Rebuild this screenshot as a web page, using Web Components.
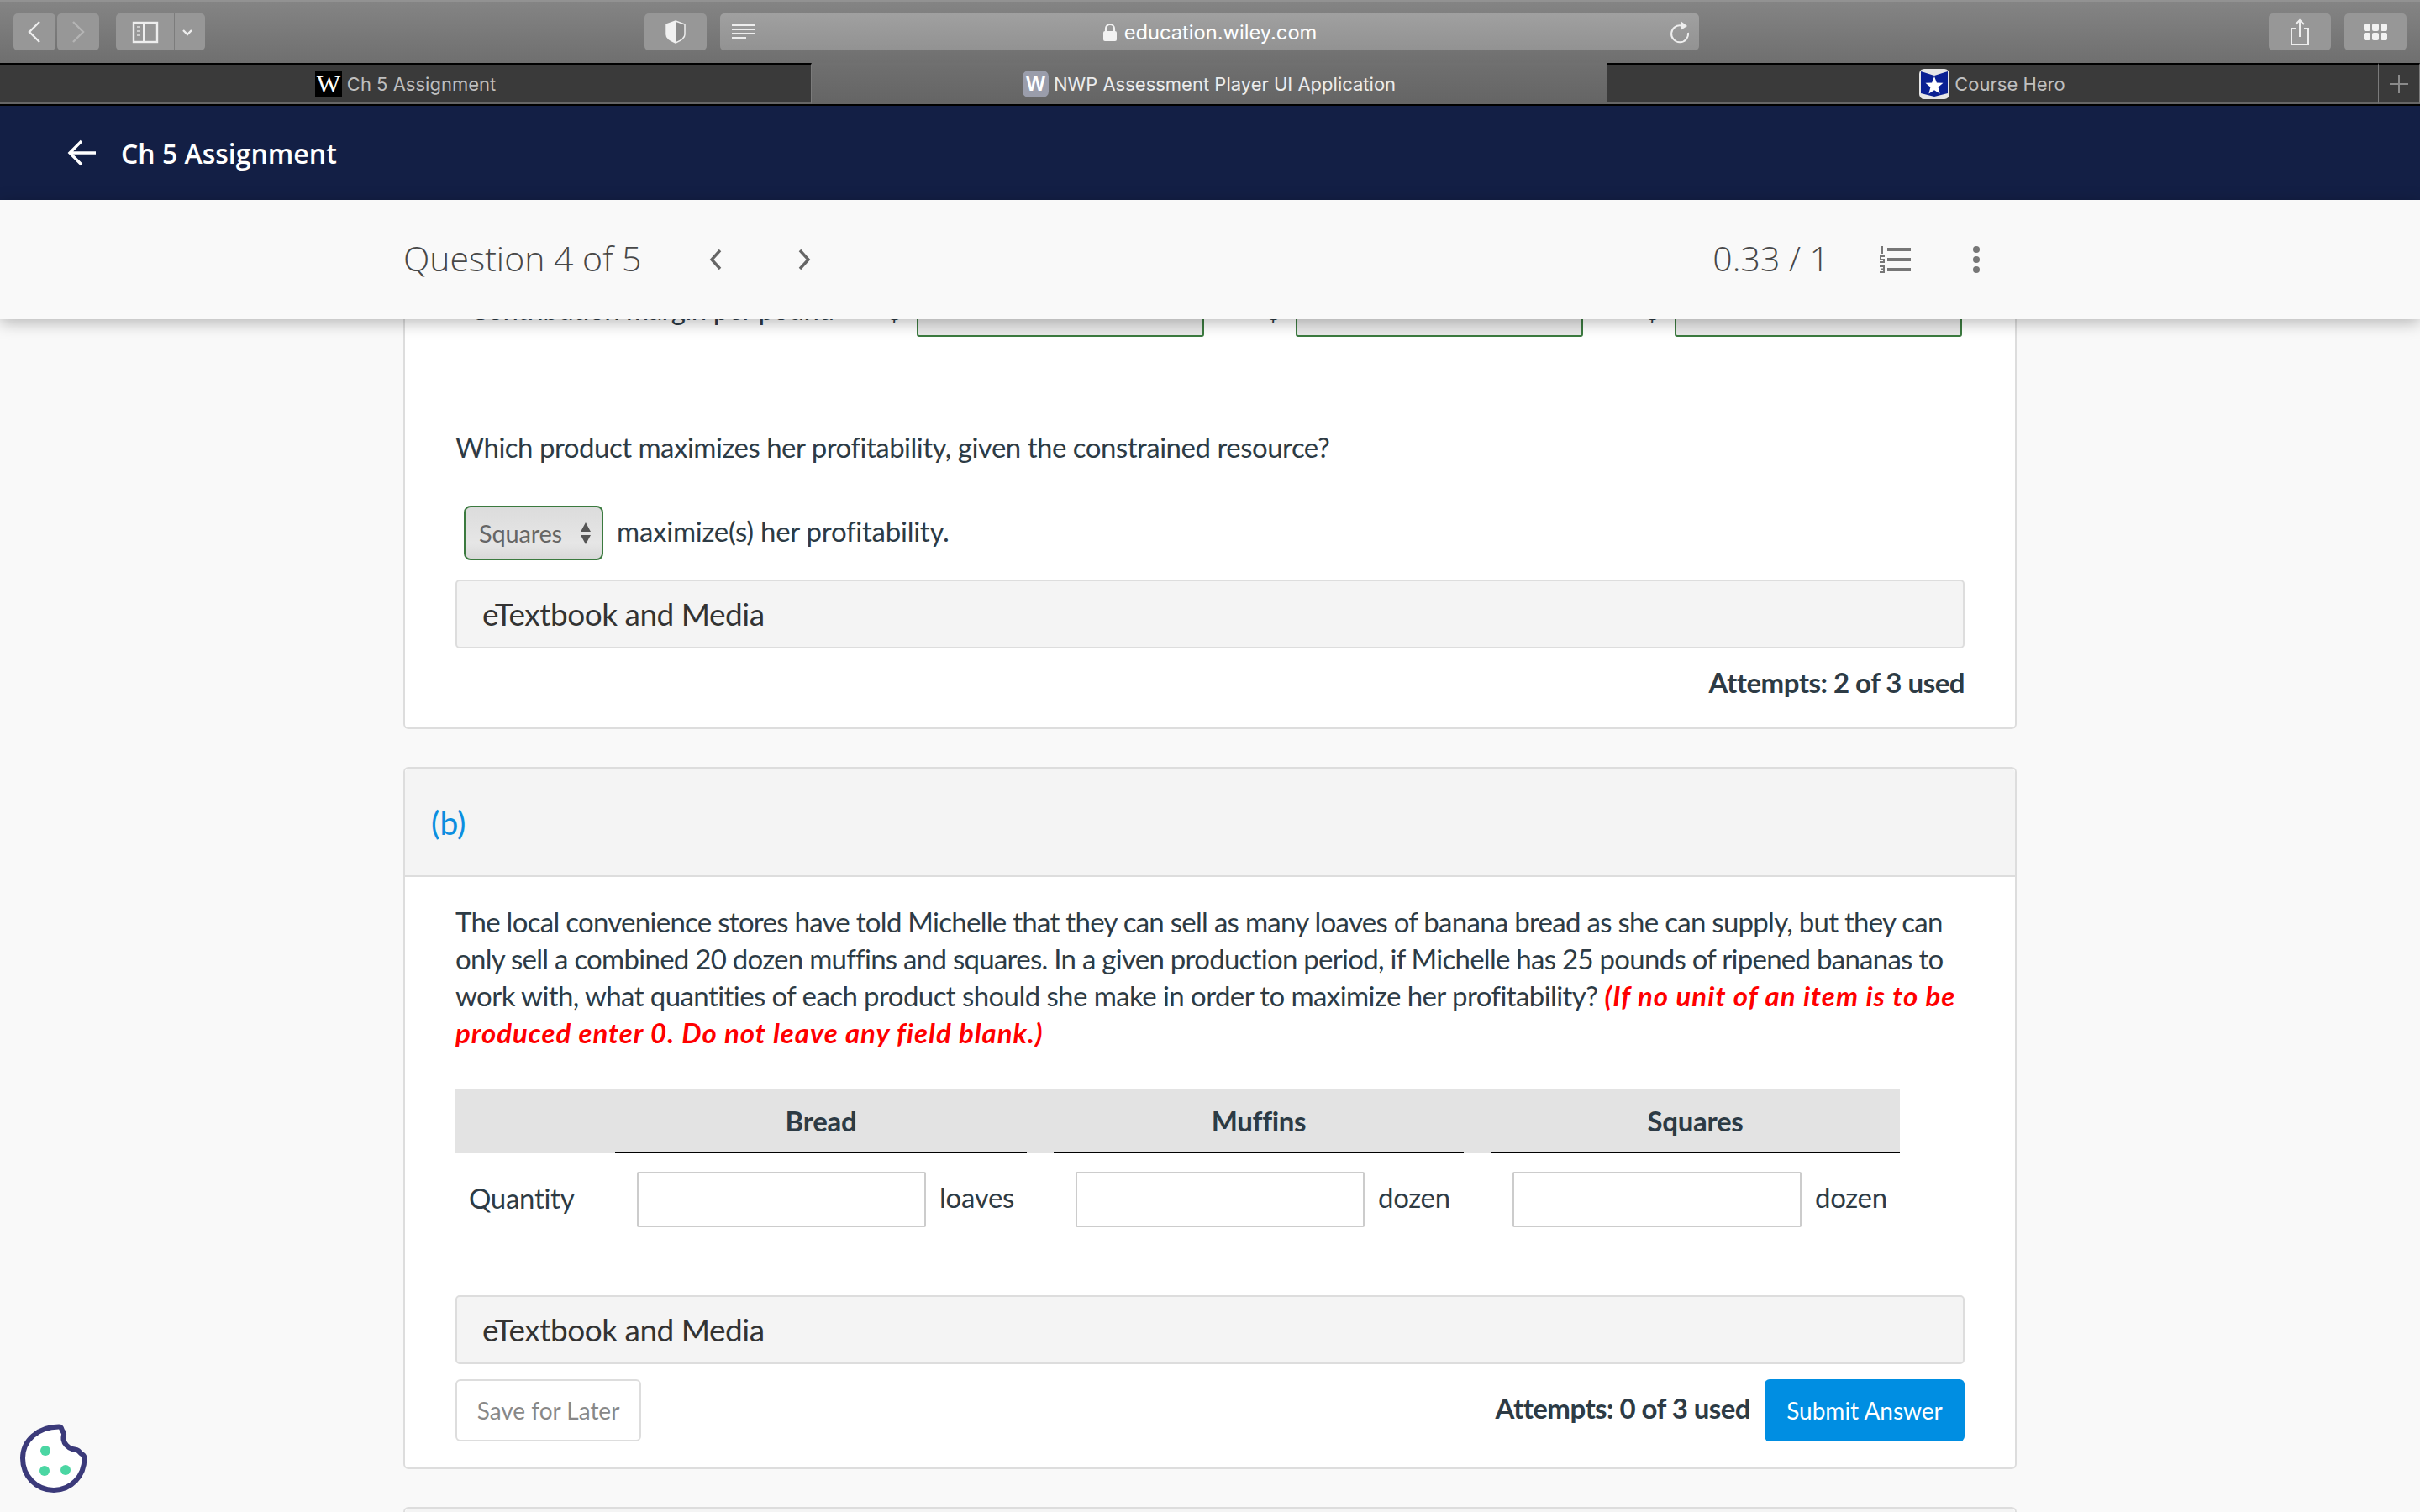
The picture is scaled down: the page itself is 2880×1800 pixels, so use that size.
<!DOCTYPE html>
<html lang="en">
<head>
<meta charset="utf-8">
<title>NWP Assessment Player UI Application</title>
<style>
  html, body { margin: 0; padding: 0; background: #f9f9f9; }
  body { width: 2880px; height: 1800px; overflow: hidden; font-family: "Lato", "Open Sans", sans-serif; color: #2d3b45; }
</style>
</head>
<body>
<browser-toolbar></browser-toolbar>
<browser-tabs>
  <browser-tab width="966">
    <span slot="icon" style="display:flex;width:32px;height:32px;background:#000;color:#fff;font:30px/32px 'Liberation Serif',serif;justify-content:center">W</span>
    Ch 5 Assignment
  </browser-tab>
  <browser-tab width="946" active>
    <span slot="icon" style="display:flex;width:31px;height:32px;border-radius:7px;background:#9a9dab;color:#fff;font:600 24px/32px Inter,sans-serif;justify-content:center">W</span>
    NWP Assessment Player UI Application
  </browser-tab>
  <browser-tab width="919">
    <svg slot="icon" width="36" height="36" viewBox="0 0 36 36"><rect width="36" height="36" rx="6" fill="#e6e6e6"/><path d="M2 3 L18 8 L34 3 V29 L18 33 L2 29Z" fill="#0a2093"/><path d="M18 9l2.900 7.400 7.600.4-5.900 5 2 7.700-6.600-4.300-6.600 4.300 2-7.700-5.900-5 7.600-.4z" fill="#fff"/></svg>
    Course Hero
  </browser-tab>
  <browser-tab width="49" plus>
    <svg slot="icon" width="24" height="24" viewBox="0 0 24 24"><path d="M12 1v22M1 12h22" stroke="#8a8a8a" stroke-width="2"/></svg>
  </browser-tab>
</browser-tabs>
<app-header>Ch 5 Assignment</app-header>
<question-bar></question-bar>
<scroll-area>
  <q-card cut>
    <cut-row></cut-row>
    <q-text style="margin-top:109px">Which product maximizes her profitability, given the constrained resource?</q-text>
    <select-row>maximize(s) her profitability.</select-row>
    <media-bar style="margin-top:23px">eTextbook and Media</media-bar>
    <attempts-line style="margin-top:18px;margin-bottom:2px;justify-content:flex-end">Attempts: 2 of 3 used</attempts-line>
  </q-card>
  <q-card label="(b)" style="margin-top:45px;height:836px">
    <q-text style="margin-top:31px"><span style="letter-spacing:-.72px">The local convenience stores have told Michelle that they can sell as many loaves of banana bread as she can supply, but they can</span><br><span style="letter-spacing:-.73px">only sell a combined 20 dozen muffins and squares. In a given production period, if Michelle has 25 pounds of ripened bananas to</span><br><span style="letter-spacing:-.58px">work with, what quantities of each product should she make in order to maximize her profitability?</span> <b style="letter-spacing:1.05px">(If no unit of an item is to be<br></b><b style="letter-spacing:.97px">produced enter 0. Do not leave any field blank.)</b></q-text>
    <qty-table></qty-table>
    <media-bar style="margin-top:81px">eTextbook and Media</media-bar>
    <card-footer>Attempts: 0 of 3 used</card-footer>
  </q-card>
  <q-card label="" style="margin-top:45px;height:60px"></q-card>
</scroll-area>
<cookie-badge></cookie-badge>

<script>
  // small helper so each element just declares its shadow markup
  function register(name, html) {
    customElements.define(name, class extends HTMLElement {
      constructor() {
        super();
        this.attachShadow({ mode: 'open' }).innerHTML = typeof html === 'function' ? html(this) : html;
      }
      connectedCallback() {
        if (typeof html === 'function') this.shadowRoot.innerHTML = html(this);
      }
    });
  }

  register('browser-toolbar', `
    <style>
      :host { display: flex; box-sizing: border-box; height: 75px; padding: 16px 16px 0; align-items: flex-start;
        background: linear-gradient(#848484, #6f6f6f); border-top: 2px solid #929292; margin-top: 0; font-family: Inter, sans-serif; }
      .b { display: flex; align-items: center; justify-content: center; height: 44px; background: #979797; border-radius: 5px; margin-top: -2px; }
      svg { display: block; }
      .addr { position: relative; display: flex; align-items: center; justify-content: center; width: 1166px; margin-left: 16px; gap: 8px;
        background: linear-gradient(#a0a0a0, #929292); color: #fff; font-size: 23.7px; font-weight: 400; }
      .addr .reader { position: absolute; left: 13px; top: 12px; }
      .addr .reload { position: absolute; right: 10px; top: 8px; }
    </style>
    <div class="b" style="width:50px"><svg width="18" height="28" viewBox="0 0 18 28"><path d="M15 2 3 14l12 12" fill="none" stroke="#eee" stroke-width="2.4"/></svg></div>
    <div class="b" style="width:50px;margin-left:2px"><svg width="18" height="28" viewBox="0 0 18 28"><path d="M3 2l12 12L3 26" fill="none" stroke="#b4b4b4" stroke-width="2.4"/></svg></div>
    <div class="b" style="width:106px;margin-left:20px;background:linear-gradient(90deg,#979797 69px,#7c7c7c 69px,#7c7c7c 70px,#979797 70px)">
      <svg width="106" height="44" viewBox="0 0 106 44"><rect x="21" y="11" width="28" height="23" fill="none" stroke="#eee" stroke-width="2.4"/><path d="M33 11v23" stroke="#eee" stroke-width="2"/><path d="M25 16h4M25 21h4M25 26h4" stroke="#ccc" stroke-width="2"/><path d="M80 20l5 5 5-5" fill="none" stroke="#eee" stroke-width="2.4"/></svg>
    </div>
    <div class="b" style="width:74px;margin-left:523px"><svg width="24" height="28" viewBox="0 0 24 28"><path d="M12 1 23 5v12c0 5-6 8-11 10C7 25 1 22 1 17V5z" fill="#8b8b8b" stroke="#eee" stroke-width="1.500"/><path d="M12 1 1 5v12c0 5 6 8 11 10z" fill="#f1f1f1"/></svg></div>
    <div class="b addr">
      <svg class="reader" width="30" height="22" viewBox="0 0 30 22"><path d="M1 2h28M1 7h28M1 12h28M1 17h17" stroke="#eee" stroke-width="2"/></svg>
      <svg width="18" height="21" viewBox="0 0 18 21"><path d="M4 9V6a5 5 0 0 1 10 0v3" fill="none" stroke="#f2f2f2" stroke-width="2.200"/><rect x="1" y="9" width="16" height="12" rx="2" fill="#f2f2f2"/></svg>
      <span>education.wiley.com</span>
      <svg class="reload" width="26" height="28" viewBox="0 0 26 28"><path d="M15 6.500A10 10 0 1 0 23 15" fill="none" stroke="#eee" stroke-width="2"/><path d="M14 1l8 6-8 5z" fill="#eee"/></svg>
    </div>
    <div class="b" style="width:74px;margin-left:678px"><svg width="24" height="32" viewBox="0 0 24 32"><path d="M7 12H2v19h20V12h-5" fill="none" stroke="#eee" stroke-width="2"/><path d="M12 22V2M7 7l5-5 5 5" fill="none" stroke="#eee" stroke-width="2"/></svg></div>
    <div class="b" style="width:74px;margin-left:16px"><svg width="28" height="20" viewBox="0 0 28 20" fill="#f2f2f2"><rect width="8" height="9" rx="2"/><rect x="10" width="8" height="9" rx="2"/><rect x="20" width="8" height="9" rx="2"/><rect y="11" width="8" height="9" rx="2"/><rect x="10" y="11" width="8" height="9" rx="2"/><rect x="20" y="11" width="8" height="9" rx="2"/></svg></div>
  `);

  register('browser-tabs', `
    <style>
      :host { display: flex; height: 51px; background: #6b6b6b; box-sizing: border-box; border-bottom: 2px solid #000; }
    </style>
    <slot></slot>
  `);

  register('browser-tab', el => `
    <style>
      :host { display: flex; box-sizing: border-box; width: ${el.getAttribute('width')}px; align-items: center; justify-content: center; gap: 6px;
        height: 49px; font: 22px Inter, sans-serif; font-weight: 400;
        color: ${el.hasAttribute('active') ? '#ececec' : '#bfbfbf'};
        background: ${el.hasAttribute('active') ? 'linear-gradient(#6f6f6f, #656565)' : '#3a3a3a'};
        border-top: 2px solid ${el.hasAttribute('active') ? '#707070' : '#000'};
        border-right: ${el.hasAttribute('active') ? '0' : '1px solid #7b7b7b'};
        border-bottom: 2px solid #666; }
    </style>
    <slot name="icon"></slot><slot></slot>
  `);

  register('app-header', `
    <style>
      :host { display: flex; align-items: center; height: 112px; box-sizing: border-box; padding-left: 80px; gap: 30px;
        background: #131f45; color: #fff; font: 600 32px "Open Sans", sans-serif; }
      svg { display: block; }
    </style>
    <svg width="34" height="32" viewBox="0 0 34 32"><path d="M17 2 3 16l14 14M3 16h31" fill="none" stroke="#fff" stroke-width="3.400"/></svg>
    <slot></slot>
  `);

  register('question-bar', `
    <style>
      :host { display: flex; align-items: center; position: relative; z-index: 5; height: 142px; box-sizing: border-box; padding-left: 480px;
        background: #f9f9f9; color: #484848; font: 300 41px "Open Sans", sans-serif; box-shadow: 0 4px 18px rgba(0,0,0,.28); }
      svg { display: block; }
      span { position: relative; top: -2px; }
      .right { margin-left: auto; display: flex; align-items: center; margin-right: 524px; }
    </style>
    <span>Question 4 of 5</span>
    <svg style="margin-left:79px" width="18" height="26" viewBox="0 0 18 26"><path d="M14 2 4 13l10 11" fill="none" stroke="#666" stroke-width="3.400"/></svg>
    <svg style="margin-left:87px" width="18" height="26" viewBox="0 0 18 26"><path d="M4 2l10 11L4 24" fill="none" stroke="#666" stroke-width="3.400"/></svg>
    <div class="right">
      <span>0.33 / 1</span>
      <svg style="margin-left:59px" width="38" height="32" viewBox="0 0 38 32" fill="#777"><rect x="10" y="2" width="28" height="4"/><rect x="10" y="14" width="28" height="4"/><rect x="10" y="26" width="28" height="4"/><path d="M3 0h2v9H3zM1 11h6v2H3v2h4v5H1v-2h4v-2H1zM1 23h6v9H1v-2h4v-1.500H2v-2h3V25H1z"/></svg>
      <svg style="margin-left:74px" width="8" height="32" viewBox="0 0 8 32" fill="#777"><circle cx="4" cy="4" r="4"/><circle cx="4" cy="16" r="4"/><circle cx="4" cy="28" r="4"/></svg>
    </div>
  `);

  register('scroll-area', `
    <style>
      :host { display: block; height: 1420px; overflow: hidden; padding-left: 480px; width: 1920px; }
    </style>
    <slot></slot>
  `);

  register('q-card', el => `
    <style>
      :host { display: block; box-sizing: border-box; width: 1920px; background: #fff; border: 2px solid #ddd;
        border-radius: 6px; ${el.hasAttribute('cut') ? 'border-top: 0; border-radius: 0 0 6px 6px;' : ''} }
      .head { display: flex; align-items: center; box-sizing: border-box; height: 129px; padding-left: 31px; background: #f4f4f4;
        border-bottom: 2px solid #ddd; color: #0b8ee0; font-size: 39px; border-radius: 5px 5px 0 0; }
      .body { padding: 0 60px 30px; }
    </style>
    ${el.getAttribute('label') !== null ? `<div class="head">${el.getAttribute('label')}</div>` : ''}
    <div class="body"><slot></slot></div>
  `);

  // row that is mostly scrolled away under the question bar
  register('cut-row', `
    <style>
      :host { display: block; height: 21px; overflow: hidden; }
      .in { display: flex; align-items: flex-end; margin-top: -39px; height: 60px; font-size: 33px; line-height: 44px; letter-spacing: -.5px; color: #2d3b45; }
      .l { margin-left: 17px; width: 485px; margin-bottom: 11px; white-space: nowrap; }
      .d { width: 30px; margin-bottom: 11px; margin-right: 17px; text-align: right; }
      .box { box-sizing: border-box; width: 342px; height: 60px; background: #e9e9e9; border: 2px solid #3b7a3f; border-radius: 0 0 3px 3px; flex: none; }
    </style>
    <div class="in">
      <span class="l">Contribution margin per pound</span>
      <span class="d">$</span><div class="box"></div>
      <span class="d" style="margin-left:62px">$</span><div class="box"></div>
      <span class="d" style="margin-left:62px">$</span><div class="box"></div>
    </div>
  `);

  register('q-text', `
    <style>
      :host { display: block; font-size: 33px; line-height: 44px; letter-spacing: -.5px; color: #2d3b45; white-space: nowrap; }
      ::slotted(b) { color: #f00; font-style: italic; font-weight: 700; }
    </style>
    <slot></slot>
  `);

  register('select-row', `
    <style>
      :host { display: flex; align-items: center; margin-top: 48px; height: 65px; font-size: 33px; letter-spacing: -.25px; color: #2d3b45; }
      .sel { display: flex; align-items: center; box-sizing: border-box; width: 166px; height: 65px; margin: 0 16px 0 10px; padding: 0 0 0 16px;
        background: linear-gradient(#dcdcdc, #e6e6e6 70%, #d9d9d9); border: 2px solid #3b7a3f; border-radius: 8px; color: #666; font-size: 29px; letter-spacing: -.2px; }
      svg { margin-left: 21px; display: block; }
      span { position: relative; top: -3px; }
    </style>
    <div class="sel">Squares<svg width="14" height="26" viewBox="0 0 14 26" fill="#555"><path d="M7 0l6 11H1zM7 26 1 15h12z"/></svg></div>
    <span><slot></slot></span>
  `);

  register('media-bar', `
    <style>
      :host { display: flex; align-items: center; box-sizing: border-box; height: 82px; padding: 0 0 2px 30px; background: #f4f4f4;
        border: 2px solid #ddd; border-radius: 5px; color: #333; font-size: 37px; letter-spacing: -.5px; }
    </style>
    <slot></slot>
  `);

  register('attempts-line', `
    <style>
      :host { display: flex; font-size: 33px; line-height: 44px; font-weight: 700; letter-spacing: -.5px; color: #2d3b45; }
    </style>
    <slot></slot>
  `);

  register('card-footer', `
    <style>
      :host { display: flex; align-items: center; margin-top: 18px; height: 74px; font-size: 33px; }
      .save, .go { display: flex; align-items: center; justify-content: center; box-sizing: border-box; height: 74px; border-radius: 6px; font-size: 28px; }
      .save { width: 221px; border: 2px solid #ddd; color: #888; background: #fff; }
      .go { width: 238px; margin-left: 17px; background: #008ee2; color: #fff; }
      .att { margin-left: auto; font-weight: 700; letter-spacing: -.55px; position: relative; top: -3px; }
    </style>
    <div class="save">Save for Later</div>
    <span class="att"><slot></slot></span>
    <div class="go">Submit Answer</div>
  `);

  register('qty-table', `
    <style>
      :host { display: grid; grid-template-columns: 190px 490px 32px 488px 32px 487px; margin-top: 45px; width: 1719px; font-size: 33px; letter-spacing: -.3px; color: #2d3b45; }
      .h { height: 76px; background: #e3e3e3; display: flex; align-items: center; justify-content: center; font-weight: 700; padding-bottom: 1px; box-sizing: content-box; }
      .u { border-bottom: 2px solid #000; height: 75px; padding-bottom: 0; }
      .c { display: flex; align-items: center; padding-top: 22px; height: 66px; }
      input { box-sizing: border-box; width: 344px; height: 66px; margin: 0 16px 0 26px; border: 2px solid #ccc; border-radius: 2px; background: #fff; padding: 0; }
      .q { padding-left: 16px; position: relative; top: -2px; }
      .m { position: relative; top: -3px; }
    </style>
    <div class="h"></div><div class="h u">Bread</div><div class="h"></div><div class="h u">Muffins</div><div class="h"></div><div class="h u">Squares</div>
    <div class="c"><span class="q">Quantity</span></div>
    <div class="c"><input type="text" aria-label="Bread"><span class="m">loaves</span></div><div></div>
    <div class="c"><input type="text" aria-label="Muffins"><span class="m">dozen</span></div><div></div>
    <div class="c"><input type="text" aria-label="Squares"><span class="m">dozen</span></div>
  `);

  register('cookie-badge', `
    <style>
      :host { display: block; position: absolute; left: 23px; top: 1694px; z-index: 9; }
      svg { display: block; }
    </style>
    <svg width="84" height="84" viewBox="0 0 84 84">
      <path d="M47 4.500c2 0 3 1 3.500 3 .5 2 2 3 2.500 5 .5 2-1 3.500-.5 7 .8 5 5 10 10.500 11.500 3 .8 5 .5 7 2 2 1.500 2.500 3 5 4.500 1.500 1 2.500 2 2.500 4C77.500 64 61 80 41 80 20 80 4 63 4 42 4 21 22 4.500 47 4.500z" fill="#fff" stroke="#3b3a7a" stroke-width="6" stroke-linejoin="round"/>
      <circle cx="31" cy="33" r="6" fill="#4bd6a3"/><circle cx="30" cy="57" r="6" fill="#4bd6a3"/><circle cx="55" cy="56" r="6" fill="#4bd6a3"/>
    </svg>
  `);
</script>
</body>
</html>
